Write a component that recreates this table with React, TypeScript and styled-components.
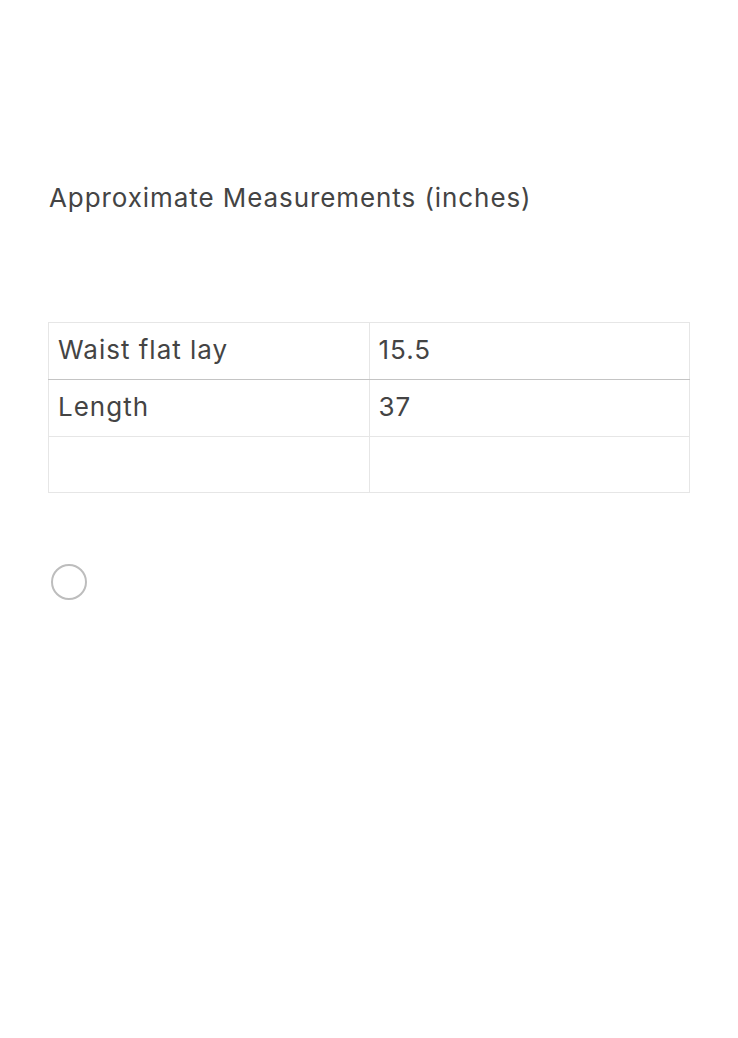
import React from "react";
import styled, { createGlobalStyle } from "styled-components";

const Global = createGlobalStyle`
  html, body { margin: 0; padding: 0; background: #fff; }
  body { font-family: Inter, "Noto Sans", sans-serif; color: #444; }
`;

const Page = styled.div`
  padding: 180px 48px 0 48px;
  display: flex;
  flex-direction: column;
`;

const Title = styled.h2`
  margin: 0 0 0 1px;
  font-size: 26px;
  font-weight: 400;
  line-height: 36px;
  letter-spacing: 0.92px;
  color: #444;
`;

const Table = styled.table`
  margin-top: 106px;
  width: 642px;
  border-collapse: collapse;
  table-layout: fixed;
`;

const Row = styled.tr<{ $h?: number }>`
  height: ${(p) => p.$h ?? 57}px;
`;

const Cell = styled.td<{ $strong?: boolean }>`
  border: 1px solid #e6e6e6;
  border-bottom: 1px solid ${(p) => (p.$strong ? "#c4c4c4" : "#e6e6e6")};
  padding: 0 9px 3px 9px;
  font-size: 26px;
  letter-spacing: 1px;
  color: #444;
  vertical-align: middle;
`;

const Radio = styled.div`
  margin-top: 71px;
  margin-left: 3px;
  width: 32px;
  height: 32px;
  border: 2px solid #bdbdbd;
  border-radius: 50%;
`;

export default function App() {
  return (
    <>
      <Global />
      <Page>
        <Title>Approximate Measurements (inches)</Title>
        <Table>
          <tbody>
            <Row>
              <Cell $strong>Waist flat lay</Cell>
              <Cell $strong>15.5</Cell>
            </Row>
            <Row>
              <Cell>Length</Cell>
              <Cell>37</Cell>
            </Row>
            <Row $h={56}>
              <Cell></Cell>
              <Cell></Cell>
            </Row>
          </tbody>
        </Table>
        <Radio />
      </Page>
    </>
  );
}
